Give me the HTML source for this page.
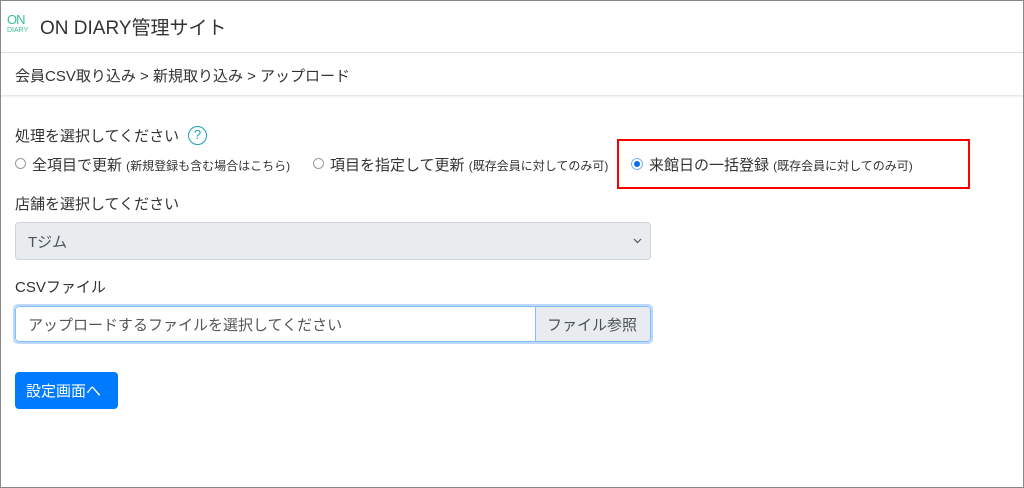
<!DOCTYPE html>
<html><head><meta charset="utf-8"><style>
*{box-sizing:border-box;margin:0;padding:0}
body{width:1024px;height:488px;overflow:hidden;background:#fff;font-family:"Liberation Sans","Noto Sans CJK JP",sans-serif;color:#333;position:relative}
.frame{position:absolute;left:0;top:0;width:1024px;height:488px;border:1px solid #888;}
.abs{position:absolute;white-space:nowrap}
</style></head><body>
<div class="frame"></div>
<div class="abs" style="left:1px;top:52px;width:1022px;height:1px;background:#ddd"></div>
<div class="abs" style="left:1px;top:95px;width:1022px;height:3px;background:linear-gradient(#e4e4e4,#fff)"></div>
<div class="abs" style="left:7px;top:13px;color:#3bbf9a;font-size:13px;line-height:13px;letter-spacing:-1px">ON</div>
<div class="abs" style="left:7px;top:27px;color:#3bbf9a;font-size:7px;line-height:8px">DIARY</div>
<div class="abs" style="left:40px;top:13px;font-size:19px;color:#333">ON DIARY管理サイト</div>
<div class="abs" style="left:15px;top:65px;font-size:15px;color:#333">会員CSV取り込み &gt; 新規取り込み &gt; アップロード</div>
<div class="abs" style="left:15px;top:125px;font-size:15px">処理を選択してください</div>
<div class="abs" style="left:188px;top:126px;width:19px;height:19px;border:1.5px solid #17a2b8;border-radius:50%;color:#17a2b8;font-size:13px;text-align:center;line-height:16px">?</div>
<div class="abs" style="left:15px;top:158px;width:11px;height:11px;border:1px solid #999;border-radius:50%"></div>
<div class="abs" style="left:32px;top:154px;font-size:15px">全項目で更新 <span style="font-size:12px">(新規登録も含む場合はこちら)</span></div>
<div class="abs" style="left:313px;top:158px;width:11px;height:11px;border:1px solid #999;border-radius:50%"></div>
<div class="abs" style="left:330px;top:154px;font-size:15px">項目を指定して更新 <span style="font-size:12px">(既存会員に対してのみ可)</span></div>
<div class="abs" style="left:617px;top:139px;width:353px;height:50px;border:2px solid #f00"></div>
<div class="abs" style="left:631px;top:158px;width:12px;height:12px;border:1px solid #7ab4f5;border-radius:50%;background:#fff"><div style="margin:2px;width:6px;height:6px;border-radius:50%;background:#0a6ee6"></div></div>
<div class="abs" style="left:649px;top:154px;font-size:15px">来館日の一括登録 <span style="font-size:12px">(既存会員に対してのみ可)</span></div>
<div class="abs" style="left:15px;top:193px;font-size:15px">店舗を選択してください</div>
<div class="abs" style="left:15px;top:222px;width:636px;height:38px;background:#e9ecef;border:1px solid #ced4da;border-radius:4px;font-size:15px;padding:8px 12px;color:#495057">Tジム<svg style="position:absolute;right:8px;top:15px" width="9" height="6" viewBox="0 0 9 6"><path d="M1 1L4.5 4.5L8 1" fill="none" stroke="#555" stroke-width="1.2"/></svg></div>
<div class="abs" style="left:15px;top:276px;font-size:15px">CSVファイル</div>
<div class="abs" style="left:13px;top:304px;width:640px;height:40px;border:2px solid #bcd9fb;border-radius:5px"></div>
<div class="abs" style="left:15px;top:306px;width:636px;height:36px;border:1px solid #80bdff;border-radius:4px;overflow:hidden">
<div style="position:absolute;left:12px;top:7px;font-size:15px;color:#555">アップロードするファイルを選択してください</div>
<div style="position:absolute;left:519px;top:0;width:117px;height:36px;background:#e9ecef;border-left:1px solid #80bdff;font-size:15px;color:#495057;padding:7px 0 0 11px">ファイル参照</div></div>
<div class="abs" style="left:15px;top:372px;width:103px;height:37px;background:#007bff;border-radius:4px;color:#fff;font-size:15px;padding:8px 0 0 11px">設定画面へ</div>
</body></html>
